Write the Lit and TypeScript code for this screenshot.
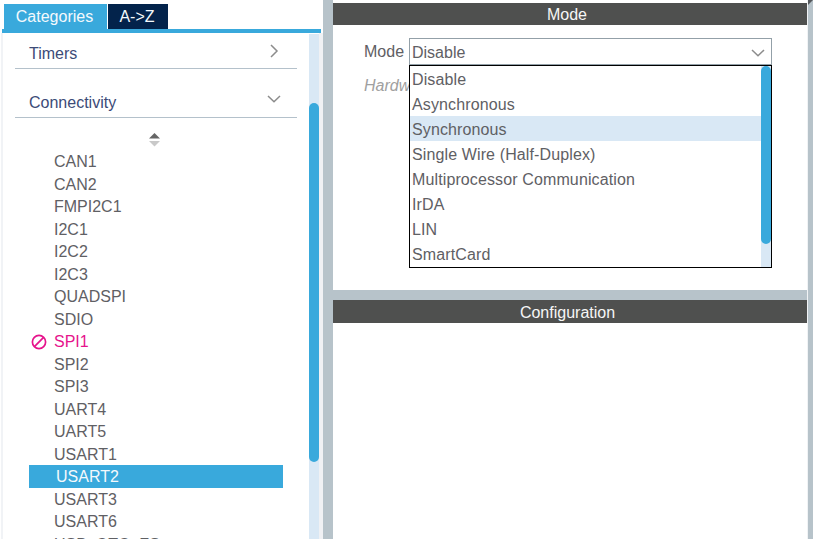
import { LitElement, html, css, svg } from "lit";
import { customElement } from "lit/decorators.js";
import { classMap } from "lit/directives/class-map.js";

const PERIPHERALS = ["CAN1", "CAN2", "FMPI2C1", "I2C1", "I2C2", "I2C3", "QUADSPI", "SDIO", "SPI1", "SPI2", "SPI3",
  "UART4", "UART5", "USART1", "USART2", "USART3", "USART6", "USB_OTG_FS"];
const MODES = ["Disable", "Asynchronous", "Synchronous", "Single Wire (Half-Duplex)",
  "Multiprocessor Communication", "IrDA", "LIN", "SmartCard"];

const chevron = (d: string) => html`<svg class="chevron" width="14" height="14" viewBox="0 0 14 14">
  ${svg`<path d=${d} fill="none" stroke="#8c8c8c" stroke-width="1.5"/>`}</svg>`;
const DOWN = "M1 4 L7 9.8 L13 4";
const RIGHT = "M4 1 L10 7 L4 13";

@customElement("category-panel")
export class CategoryPanel extends LitElement {
  static styles = css`
    :host { display: flex; flex-direction: column; width: 323px; height: 539px; background: #fff; overflow: hidden; }
    .tabs { display: flex; gap: 1px; height: 25px; padding: 4px 0 0 4px; flex: none; }
    .tab { height: 25px; line-height: 25px; color: #f4f9fc; text-align: center; background: #03234b; width: 60px; }
    .tab.active { width: 103px; background: #39a9dc; text-indent: -2px; }
    .tab.az { text-indent: -2px; }
    .rule { height: 4px; width: 319px; margin-left: 2px; background: #39a9dc; flex: none; }
    .body { display: flex; flex: 1; min-height: 0; border-left: 2px solid #f1f3f6; margin-left: 1px; }
    .content { width: 306px; flex: none; overflow: hidden; }
    .group { display: flex; align-items: center; justify-content: space-between; margin-left: 12px; width: 268px;
      padding-left: 14px; border-bottom: 1px solid #b4c1cb; color: #3c4b78; box-sizing: content-box; }
    .group.first { height: 28px; padding-top: 7px; }
    .group.second { height: 28px; padding-top: 20px; }
    .group .chevron { transform: translateY(-4px); margin-right: 16px; }
    .group.first .chevron { transform: translateY(-3px); }
    .sort { display: block; margin: 15px 0 0 146px; }
    .list { margin: 3px 0 0; padding: 0; list-style: none; }
    .item { display: flex; align-items: center; box-sizing: border-box; height: 22.5px; padding-top: 2px;
      margin-left: 26px; width: 254px; color: #5f6064; }
    .mark { width: 25px; flex: none; display: flex; }
    .mark svg { margin-left: 2px; }
    .item.selected { background: #39a9dc; color: #f4f9fc; }
    .item.selected .mark { width: 27px; }
    .item.blocked { color: #e6138c; }
    .track { width: 10px; background: #d9e8f5; flex: none; margin-top: 1px; }
    .thumb { margin-top: 69px; height: 359px; border-radius: 5px; background: #39a9dc; }
    .edge { flex: 1; background: #f0f1f4; }
  `;
  render() {
    return html`
      <div class="tabs"><div class="tab active">Categories</div><div class="tab az">A-&gt;Z</div></div>
      <div class="rule"></div>
      <div class="body">
        <div class="content">
          <div class="group first"><span>Timers</span>${chevron(RIGHT)}</div>
          <div class="group second"><span>Connectivity</span>${chevron(DOWN)}</div>
          <svg class="sort" width="11" height="14" viewBox="0 0 11 14">
            <path d="M5.5 0 L11 5.5 H0 Z" fill="#666"/><path d="M0 8 H11 L5.5 13.5 Z" fill="#c9c9c9"/>
          </svg>
          <ul class="list">
            ${PERIPHERALS.map((p) => html`
              <li class=${classMap({ item: true, selected: p === "USART2", blocked: p === "SPI1" })}>
                <span class="mark">${p === "SPI1" ? html`<svg width="16" height="16" viewBox="0 0 16 16">
                  <g fill="none" stroke="#e6138c" stroke-width="1.7"><circle cx="8" cy="8" r="6.6"/><path d="M3.4 12.6 L12.6 3.4"/></g>
                </svg>` : ""}</span><span>${p}</span>
              </li>`)}
          </ul>
        </div>
        <div class="track"><div class="thumb"></div></div>
        <div class="edge"></div>
      </div>`;
  }
}

@customElement("mode-select")
export class ModeSelect extends LitElement {
  static styles = css`
    :host { display: block; position: relative; width: 363px; height: 27px; }
    .field { display: flex; align-items: center; justify-content: space-between; box-sizing: border-box; height: 27px;
      border: 1px solid #93a0a8; padding: 2px 6px 0 2px; background: #fff; }
    .menu { position: absolute; top: 27px; left: 0; box-sizing: border-box; width: 363px; height: 203px;
      border: 1px solid #000; background: #fff; display: flex; }
    .options { flex: 1; }
    .option { height: 25px; line-height: 28px; padding-left: 2px; white-space: nowrap; letter-spacing: .12px; }
    .option.hover { background: #d9e8f5; }
    .track { width: 10px; background: #d9e8f5; }
    .thumb { height: 178px; border-radius: 5px; background: #39a9dc; }
  `;
  render() {
    return html`
      <div class="field"><span>Disable</span>${chevron(DOWN)}</div>
      <div class="menu">
        <div class="options">${MODES.map((m) => html`
          <div class=${classMap({ option: true, hover: m === "Synchronous" })}>${m}</div>`)}</div>
        <div class="track"><div class="thumb"></div></div>
      </div>`;
  }
}

@customElement("app-root")
export class AppRoot extends LitElement {
  static styles = css`
    :host { display: flex; width: 813px; height: 539px; overflow: hidden; background: #b7c3ca;
      font: 16px "Liberation Sans", Arial, sans-serif; color: #5f6064; }
    .right { display: flex; flex-direction: column; gap: 10px; width: 474px; margin-left: 10px; }
    .panel { background: #fff; }
    .mode { height: 290px; box-sizing: border-box; padding-top: 3px; }
    .config { flex: 1; }
    .title { height: 22px; line-height: 23px; background: #4f504f; color: #f6f6f6; text-align: center; text-indent: -6px; }
    .config .title { height: 23px; line-height: 25px; text-indent: -5px; }
    .row { display: flex; align-items: center; margin-top: 13px; padding-left: 31px; }
    .label { width: 45px; padding-top: 1px; }
    .hint { padding: 12px 0 0 31px; font-style: italic; color: #a0a0a0; line-height: 18px; white-space: nowrap; }
    .gutter { width: 1px; background: #f1f3f5; }
    .corner { width: 5px; height: 5px; background: #55585c; clip-path: polygon(0 0, 100% 0, 0 100%); }
  `;
  render() {
    return html`
      <category-panel></category-panel>
      <main class="right">
        <section class="panel mode">
          <div class="title">Mode</div>
          <div class="row"><span class="label">Mode</span><mode-select></mode-select></div>
          <div class="hint">Hardware</div>
        </section>
        <section class="panel config"><div class="title">Configuration</div></section>
      </main>
      <div class="gutter"></div>
      <div class="corner"></div>`;
  }
}
